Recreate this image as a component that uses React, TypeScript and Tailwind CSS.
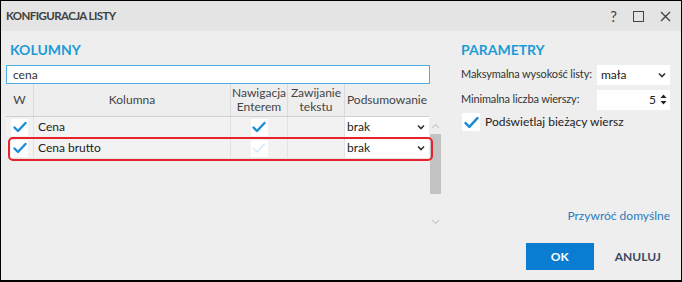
import React from 'react'

const font = { fontFamily: 'Lato, "Open Sans", sans-serif' }

function Check({ faint = false, size = 14 }: { faint?: boolean; size?: number }) {
  return (
    <svg width={size} height={size} viewBox="0 0 14 14" fill="none">
      <path
        d="M1.5 7.5 L5 11 L12.5 3"
        stroke={faint ? '#cfe6f5' : '#1b8ed6'}
        strokeWidth={faint ? 1.2 : 2.4}
        strokeLinecap="round"
        strokeLinejoin="round"
      />
    </svg>
  )
}

function Chevron() {
  return (
    <svg width="8" height="6" viewBox="0 0 8 6" fill="none">
      <path d="M1 1.5 L4 4.5 L7 1.5" stroke="#333" strokeWidth="1.6" />
    </svg>
  )
}

function CheckBox({ faint = false }: { faint?: boolean }) {
  return (
    <div className="w-[17px] h-[17px] bg-white flex items-center justify-center">
      <Check faint={faint} />
    </div>
  )
}

const rows = [
  { name: 'Cena', nav: true, highlighted: false },
  { name: 'Cena brutto', nav: false, highlighted: true },
]

export default function App() {
  return (
    <div
      className="w-[682px] h-[282px] border-x border-t border-b-2 border-black bg-[#eeeeee] text-[12px] text-[#333] flex flex-col"
      style={font}
    >
      {/* Title bar */}
      <div className="h-[30px] bg-[#e4e4e4] flex items-center pl-[5px] pr-[10px] shrink-0">
        <span className="font-bold text-[11.5px] tracking-[-0.6px] text-[#404040]">KONFIGURACJA LISTY</span>
        <div className="ml-auto flex items-center gap-[16px] text-[#444]">
          <span className="text-[15px] leading-none">?</span>
          <div className="w-[11px] h-[11px] border-[1.5px] border-[#444]" />
          <svg width="11" height="11" viewBox="0 0 11 11">
            <path d="M1 1 L10 10 M10 1 L1 10" stroke="#444" strokeWidth="1.4" />
          </svg>
        </div>
      </div>

      <div className="flex flex-1">
        {/* Left: columns */}
        <div className="w-[440px] pl-[5px] pt-[9px] flex flex-col">
          <div className="pl-[4px] text-[14px] font-bold text-[#1d9bd7] leading-[20px]">KOLUMNY</div>
          <div className="mt-[5px] w-[424px] h-[19px] border border-[#4eaee3] bg-white pl-[6px] flex items-center">
            cena
          </div>
          <div className="flex">
            <div className="w-[423px]">
              {/* header */}
              <div className="grid grid-cols-[28px_197px_57px_57px_84px] h-[33px] border-b border-[#cfcfcf] text-[#444] text-center leading-[14px]">
                <div className="flex items-center justify-center border-r border-[#dadada]">W</div>
                <div className="flex items-center justify-center border-r border-[#dadada]">Kolumna</div>
                <div className="flex items-center justify-center border-r border-[#dadada]">Nawigacja<br />Enterem</div>
                <div className="flex items-center justify-center border-r border-[#dadada]">Zawijanie<br />tekstu</div>
                <div className="flex items-center justify-center">Podsumowanie</div>
              </div>
              {rows.map((r) => (
                <div key={r.name} className="relative">
                  <div className="grid grid-cols-[28px_197px_57px_57px_84px] h-[21px] border-b border-[#e2e2e2] bg-[#f2f2f2]">
                    <div className="flex items-center justify-center border-r border-[#e2e2e2]">
                      <CheckBox />
                    </div>
                    <div className="flex items-center pl-[4px] border-r border-[#e2e2e2] text-[#222]">{r.name}</div>
                    <div className="flex items-center justify-center border-r border-[#e2e2e2]">
                      <CheckBox faint={!r.nav} />
                    </div>
                    <div className="border-r border-[#e2e2e2]" />
                    <div className="flex items-center justify-between bg-white pl-[2px] pr-[4px] text-[#222]">
                      brak
                      <Chevron />
                    </div>
                  </div>
                  {r.highlighted && (
                    <div className="absolute left-[2px] right-[-4px] top-[-1px] bottom-[-2px] border-2 border-[#e8212b] rounded-[5px]" />
                  )}
                </div>
              ))}
            </div>
            {/* scrollbar */}
            <div className="w-[12px] mt-[33px] flex flex-col items-center">
              <svg width="9" height="6" viewBox="0 0 9 6" className="mt-[6px]">
                <path d="M1 5 L4.5 1.5 L8 5" stroke="#cccccc" strokeWidth="1.2" fill="none" />
              </svg>
              <div className="w-[11px] h-[60px] bg-[#c3c3c3] mt-[5px]" />
              <svg width="9" height="6" viewBox="0 0 9 6" className="mt-[25px]">
                <path d="M1 1 L4.5 4.5 L8 1" stroke="#cccccc" strokeWidth="1.2" fill="none" />
              </svg>
            </div>
          </div>
        </div>

        {/* Right: parameters */}
        <div className="flex-1 pl-[20px] pr-[11px] pt-[9px] flex flex-col">
          <div className="text-[14px] font-bold text-[#1d9bd7] leading-[20px]">PARAMETRY</div>
          <div className="mt-[4px] flex items-center h-[21px] text-[11px]">
            <span className="w-[136px] text-[#333] whitespace-nowrap tracking-[-0.15px]">Maksymalna wysokość listy:</span>
            <div className="flex-1 h-[20px] bg-white flex items-center justify-between pl-[4px] pr-[4px] text-[#222] text-[12px]">
              mała
              <Chevron />
            </div>
          </div>
          <div className="mt-[4px] flex items-center h-[21px] text-[11px]">
            <span className="w-[136px] text-[#333] whitespace-nowrap tracking-[-0.15px]">Minimalna liczba wierszy:</span>
            <div className="flex-1 h-[20px] bg-white flex items-center justify-end pr-[3px] gap-[4px] text-[#222] text-[12px]">
              5
              <svg width="7" height="13" viewBox="0 0 7 13">
                <path d="M0.5 5 L3.5 1.5 L6.5 5 Z M0.5 8 L3.5 11.5 L6.5 8 Z" fill="#222" />
              </svg>
            </div>
          </div>
          <div className="mt-[3px] flex items-center gap-[5px] pl-[1px]">
            <div className="w-[18px] h-[18px] bg-white flex items-center justify-center">
              <Check size={15} />
            </div>
            <span className="text-[#222]">Podświetlaj bieżący wiersz</span>
          </div>

          <div className="mt-auto flex flex-col items-end pb-[10px]">
            <a className="text-[#2b7cc0] mb-[18px]">Przywróć domyślne</a>
            <div className="flex items-center gap-[21px] pr-[9px]">
              <button className="w-[68px] h-[27px] bg-[#0a7dd3] text-white font-bold text-[12px]">OK</button>
              <button className="font-bold text-[12px] text-[#3a4a60]">ANULUJ</button>
            </div>
          </div>
        </div>
      </div>
    </div>
  )
}
